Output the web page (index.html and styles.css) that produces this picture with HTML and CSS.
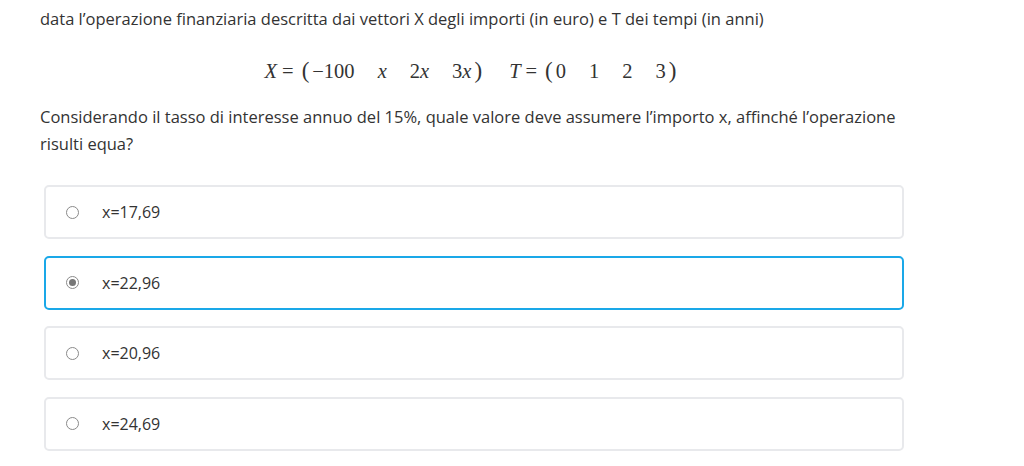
FILE: index.html
```html
<!DOCTYPE html>
<html lang="it">
<head>
    <meta charset="UTF-8">
    <title>Domanda</title>
    <link rel="stylesheet" href="styles.css">
</head>
<body>
    <div class="question">
        <p class="intro">data l’operazione finanziaria descritta dai vettori X degli importi (in euro) e T dei tempi (in anni)</p>
        <div class="math">
            <span class="mi">X</span><span class="mo">=</span><span class="paren">(</span>
            <span class="cell">−100</span><span class="cell"><i>x</i></span><span class="cell">2<i>x</i></span><span class="cell last">3<i>x</i></span><span class="paren">)</span>
            <span class="gap"></span>
            <span class="mi">T</span><span class="mo">=</span><span class="paren">(</span>
            <span class="cell">0</span><span class="cell">1</span><span class="cell">2</span><span class="cell last">3</span><span class="paren">)</span>
        </div>
        <p class="text">Considerando il tasso di interesse annuo del 15%, quale valore deve assumere l’importo x, affinché l’operazione risulti equa?</p>
    </div>

    <div class="answers">
        <label class="answer">
            <span class="radio"></span>
            <span>x=17,69</span>
        </label>
        <label class="answer selected">
            <span class="radio checked"></span>
            <span>x=22,96</span>
        </label>
        <label class="answer">
            <span class="radio"></span>
            <span>x=20,96</span>
        </label>
        <label class="answer">
            <span class="radio"></span>
            <span>x=24,69</span>
        </label>
    </div>
</body>
</html>
```

FILE: styles.css
```css
body {
    font-family: "Open Sans", "Noto Sans", sans-serif;
    font-size: 16.5px;
    color: #333;
    margin: 0;
    padding: 7px 120px 0 40px;
    background: #fff;
}
.intro {
    margin: 0;
    line-height: 24px;
}
.math {
    font-family: "Liberation Serif", serif;
    font-size: 20.5px;
    display: flex;
    justify-content: center;
    align-items: center;
    margin: 26px 0 0 0;
    height: 28px;
}
.math i {
    font-style: italic;
}
.mi {
    font-style: italic;
}
.mo {
    margin: 0 5px;
}
.paren {
    font-size: 23px;
    margin: 0 3px;
}
.cell {
    margin-right: 23px;
}
.cell.last {
    margin-right: 0;
}
.gap {
    width: 24px;
}
.text {
    margin: 18px 0 0 0;
    line-height: 27px;
}
.answers {
    margin: 28px 0 0 4px;
    width: 860px;
    display: flex;
    flex-direction: column;
    gap: 16.67px;
}
.answer {
    display: flex;
    align-items: center;
    height: 50px;
    border: 2px solid #e8e9ec;
    border-radius: 5px;
    padding-left: 20px;
    gap: 23px;
    font-size: 16px;
}
.answer.selected {
    border-color: #1aa8e8;
}
.radio {
    width: 13px;
    height: 13px;
    border: 1px solid #8a8a8a;
    border-radius: 50%;
    box-sizing: border-box;
    display: inline-block;
    position: relative;
}
.radio.checked::after {
    content: "";
    position: absolute;
    left: 2px;
    top: 2px;
    width: 7px;
    height: 7px;
    border-radius: 50%;
    background: #777;
}
```
